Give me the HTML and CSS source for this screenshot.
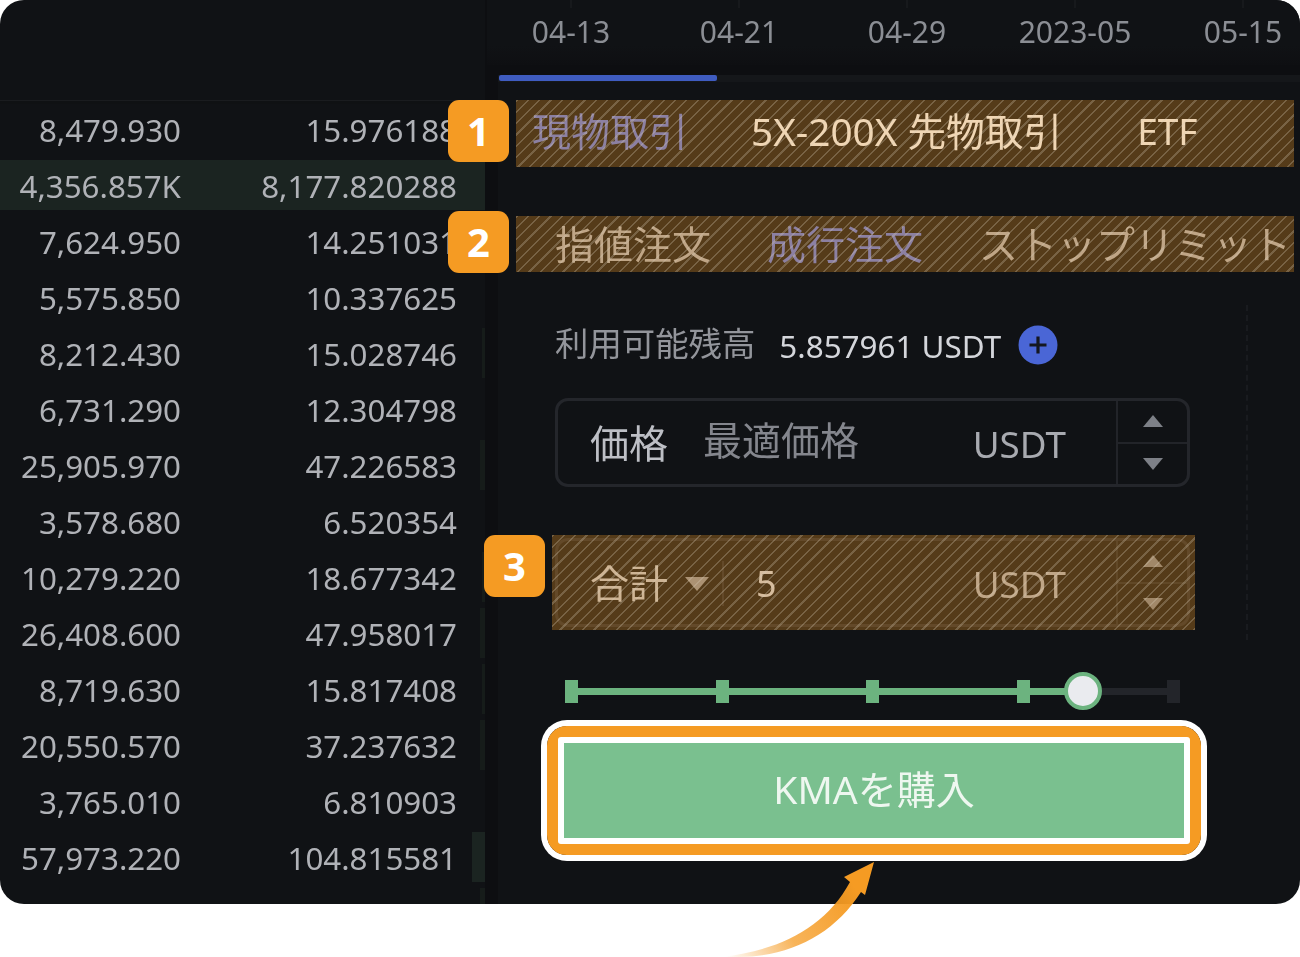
FILE: index.html
```html
<!DOCTYPE html>
<html lang="ja">
<head>
<meta charset="utf-8">
<title>KMA 購入</title>
<link rel="stylesheet" href="styles.css">
</head>
<body>
<div class="page">
  <main class="panel">
    <section class="book">
      <div class="book-head"></div>
      <div class="row"><span class="num">8,479.930</span><span class="num">15.976188</span></div>
      <div class="row"><i class="depth" style="width:100%"></i><span class="num">4,356.857K</span><span class="num">8,177.820288</span></div>
      <div class="row"><span class="num">7,624.950</span><span class="num">14.251031</span></div>
      <div class="row"><span class="num">5,575.850</span><span class="num">10.337625</span></div>
      <div class="row"><i class="depth depth-thin" style="width:3px"></i><span class="num">8,212.430</span><span class="num">15.028746</span></div>
      <div class="row"><span class="num">6,731.290</span><span class="num">12.304798</span></div>
      <div class="row"><i class="depth depth-thin" style="width:5px"></i><span class="num">25,905.970</span><span class="num">47.226583</span></div>
      <div class="row"><span class="num">3,578.680</span><span class="num">6.520354</span></div>
      <div class="row"><i class="depth depth-thin" style="width:3px"></i><span class="num">10,279.220</span><span class="num">18.677342</span></div>
      <div class="row"><i class="depth depth-thin" style="width:5px"></i><span class="num">26,408.600</span><span class="num">47.958017</span></div>
      <div class="row"><i class="depth depth-thin" style="width:3px"></i><span class="num">8,719.630</span><span class="num">15.817408</span></div>
      <div class="row"><i class="depth depth-thin" style="width:5px"></i><span class="num">20,550.570</span><span class="num">37.237632</span></div>
      <div class="row"><span class="num">3,765.010</span><span class="num">6.810903</span></div>
      <div class="row"><i class="depth" style="width:13px"></i><span class="num">57,973.220</span><span class="num">104.815581</span></div>
      <div class="row"><i class="depth depth-thin" style="width:5px"></i><span class="num">30,551.850</span><span class="num">54.736090</span></div>
    </section>
    <div class="gutter"></div>
    <section class="trade">
      <div class="axis">
        <span class="date">04-13</span>
        <span class="date">04-21</span>
        <span class="date">04-29</span>
        <span class="date">2023-05</span>
        <span class="date">05-15</span>
      </div>
      <div class="strip"><i class="strip-active"></i></div>
      <nav class="markets">
        <span class="tab tab-active tab-spot">現物取引</span>
        <span class="tab tab-white tab-futures">5X-200X 先物取引</span>
        <span class="tab tab-white tab-etf">ETF</span>
        <i class="hatch hatch-markets"></i>
        <b class="badge badge-markets">1</b>
      </nav>
      <nav class="orders">
        <span class="tab">指値注文</span>
        <span class="tab tab-active">成行注文</span>
        <span class="tab">ストップリミット</span>
        <i class="hatch hatch-orders"></i>
        <b class="badge badge-orders">2</b>
      </nav>
      <div class="form-wrap">
        <form class="form">
          <div class="balance">
            <span class="balance-label">利用可能残高</span>
            <span class="balance-value">5.857961 USDT</span>
            <svg class="plus" viewBox="0 0 40 40" aria-hidden="true"><circle cx="20" cy="20" r="19.5" fill="#4a66d6"/><path d="M20 11.5v17M11.5 20h17" stroke="#14171f" stroke-width="3.2"/></svg>
          </div>
          <div class="field">
            <div class="field-main">
              <span class="field-label">価格</span>
              <span class="field-hint">最適価格</span>
              <span class="field-unit">USDT</span>
            </div>
            <div class="stepper"><span class="step"><i class="tri-up"></i></span><span class="step"><i class="tri-down"></i></span></div>
          </div>
          <div class="field field-total">
            <div class="field-main">
              <span class="field-label">合計</span>
              <i class="tri-down tri-select"></i>
              <i class="field-sep"></i>
              <span class="field-amount">5</span>
              <span class="field-unit">USDT</span>
            </div>
            <div class="stepper"><span class="step"><i class="tri-up"></i></span><span class="step"><i class="tri-down"></i></span></div>
            <i class="hatch hatch-total"></i>
            <b class="badge badge-total">3</b>
          </div>
          <div class="slider">
            <i class="tick"></i><i class="tick"></i><i class="tick"></i><i class="tick"></i><i class="tick tick-off"></i>
            <i class="thumb"></i>
          </div>
          <div class="buy">
            <span class="buy-label">KMAを購入</span>
            <i class="callout"></i>
          </div>
        </form>
        <i class="rail"></i>
      </div>
    </section>
  </main>
  <svg class="arrow" viewBox="0 0 200 110" aria-hidden="true">
    <defs>
      <linearGradient id="fade" x1="25" y1="105" x2="150" y2="30" gradientUnits="userSpaceOnUse">
        <stop offset="0" stop-color="#f59b23" stop-opacity="0"/>
        <stop offset=".45" stop-color="#f59b23" stop-opacity=".75"/>
        <stop offset="1" stop-color="#f59b23"/>
      </linearGradient>
    </defs>
    <path fill="url(#fade)" d="M22 107C80 100 125 78 150 32L144 27L174 12L165 45L161 42C134 84 92 106 40 107Z"/>
  </svg>
</div>
</body>
</html>
```

FILE: styles.css
```css
* { box-sizing: border-box; }
html, body { margin: 0; padding: 0; background: #fff; }
body {
  font-family: "Noto Sans", "Noto Sans CJK JP", sans-serif;
  overflow: hidden;
}
i, b { display: block; font-style: normal; }
.page { position: relative; width: 1300px; height: 957px; overflow: hidden; }
.panel {
  display: flex;
  width: 1300px;
  height: 904px;
  background: #101215;
  border-radius: 24px;
  overflow: hidden;
}

/* order book */
.book { width: 485px; flex: none; }
.book-head { height: 104px; border-bottom: 3px solid #0f1113; box-shadow: inset 0 -1px 0 #1a1c1f; }
.row {
  position: relative;
  display: grid;
  grid-template-columns: 181px 276px;
  height: 56px;
  padding-bottom: 4px;
  align-items: center;
  justify-items: end;
}
.depth { position: absolute; right: 0; top: 0; height: 50px; background: #1b2421; }
.depth-thin { background: #161c1a; }
.num {
  position: relative;
  font-size: 31.3px;
  line-height: 52px;
  color: #b0b2b7;
  white-space: nowrap;
  filter: blur(.5px);
}

.gutter { width: 13px; flex: none; background: #0d0e11; }

/* right column */
.trade { flex: 1; min-width: 0; }
.axis {
  display: grid;
  grid-template-columns: repeat(5, 168px);
  margin-left: -11px;
  height: 65px;
  padding-bottom: 2px;
  align-items: center;
  justify-items: center;
  background:
    linear-gradient(90deg, transparent 83px, #17191c 83px 85px, transparent 85px) 0 0 / 168px 8px repeat-x,
    linear-gradient(#101215 70%, #0e0f12);
}
.date { font-size: 30px; color: #8b8e94; white-space: nowrap; filter: blur(.5px); }
.strip { height: 35px; padding-top: 10px; background: linear-gradient(#0d0e11 10px, #15171a 10px, #15171a 17px, #101215 17px); }
.strip-active { width: 218px; height: 6px; margin-left: 1px; border-radius: 2px; background: #3f5cc0; }

.markets, .orders { position: relative; display: flex; align-items: center; white-space: nowrap; }
.markets { height: 67px; padding: 0 0 5px 34px; }
.orders { height: 56px; margin-top: 49px; padding-left: 57px; gap: 56px; }
.tab { font-size: 39px; line-height: 1.2; color: #a8aab0; filter: blur(.5px); }
.tab-active { color: #5f75d8; }
.tab-white { color: #eeeff2; }
.tab-futures { margin-left: 63px; font-size: 38.7px; }
.tab-etf { margin-left: 75px; font-size: 37px; }

.hatch {
  position: absolute;
  background:
    repeating-linear-gradient(135deg, rgba(215, 205, 185, .27) 0 1.6px, transparent 1.6px 8px),
    rgba(245, 155, 35, .3);
}
.hatch-markets { left: 18px; right: 6px; top: 0; bottom: 0; }
.hatch-orders { left: 18px; right: 6px; top: 0; bottom: 0; }
.hatch-total { left: -6px; right: -8px; top: -6px; bottom: -6px; }

.badge {
  position: absolute;
  width: 61px;
  height: 62px;
  border-radius: 11px;
  background: #f59b23;
  color: #fff;
  font-size: 40px;
  font-weight: 700;
  line-height: 62px;
  text-align: center;
}
.badge-markets { left: -50px; top: 0; }
.badge-orders { left: -50px; top: -5px; }
.badge-total { left: -74px; top: -6px; }

/* form */
.form-wrap { display: flex; align-items: flex-start; }
.form { width: 635px; margin: 0 0 0 57px; padding-top: 53px; flex: none; }
.balance { display: flex; align-items: center; height: 40px; }
.balance-label { font-size: 33.4px; line-height: 40px; margin-top: -4px; color: #93959b; filter: blur(.5px); }
.balance-value { font-size: 31.4px; margin-left: 24px; color: #d4d6db; white-space: nowrap; filter: blur(.4px); }
.plus { width: 40px; height: 40px; margin-left: 17px; flex: none; }

.field {
  position: relative;
  display: flex;
  height: 89px;
  margin-top: 33px;
  border: 3px solid #24262b;
  border-radius: 13px;
}
.field-total { margin-top: 51px; }
.field-main { position: relative; flex: 1; display: flex; align-items: center; padding: 2px 0 0 32px; white-space: nowrap; }
.field-label { font-size: 39px; line-height: 1.2; color: #bdbfc5; filter: blur(.5px); }
.field-hint { font-size: 39px; line-height: 1.2; margin: -6px 0 0 35px; color: #84868d; filter: blur(.5px); }
.field-unit { margin-left: auto; margin-right: 50px; font-size: 36.8px; color: #a8aab0; filter: blur(.5px); }
.field-amount { font-size: 36px; color: #c9cbd1; margin-left: 32px; filter: blur(.5px); }
.field-sep { width: 2px; height: 45px; margin-left: 13px; background: #24262b; }
.stepper { width: 71px; flex: none; display: flex; flex-direction: column; border-left: 2px solid #222429; }
.step { flex: 1; display: flex; align-items: center; justify-content: center; }
.step + .step { border-top: 2px solid #222429; }
.tri-up, .tri-down { width: 0; height: 0; border-left: 10px solid transparent; border-right: 10px solid transparent; }
.tri-up { border-bottom: 12px solid #7d8087; }
.tri-down { border-top: 12px solid #7d8087; }
.tri-select { margin-left: 17px; border-left-width: 12px; border-right-width: 12px; border-top: 14px solid #8d8f95; }

.slider {
  position: relative;
  display: flex;
  justify-content: space-between;
  width: 615px;
  height: 23px;
  margin: 53px 0 0 10px;
  background: linear-gradient(90deg, #6cb37f 84%, #23252a 84%) center / 100% 7px no-repeat;
}
.tick { width: 13px; height: 23px; background: #6cb37f; }
.tick-off { background: #23252a; }
.thumb {
  position: absolute;
  left: 499px;
  top: -8px;
  width: 38px;
  height: 38px;
  border-radius: 50%;
  background: #eaebef;
  border: 4px solid #6cb37f;
}

.buy {
  position: relative;
  display: flex;
  align-items: center;
  justify-content: center;
  width: 620px;
  height: 95px;
  margin: 40px 0 0 9px;
  background: #7ac08f;
}
.buy-label { font-size: 39px; line-height: 1.2; margin-top: -2px; color: #eef7f0; filter: blur(.4px); }
.callout {
  position: absolute;
  inset: -17px;
  border: 11px solid #f59b23;
  border-radius: 20px;
  box-shadow: 0 0 0 6px #fff;
}
.callout::before {
  content: "";
  position: absolute;
  inset: 0;
  border: 6px solid #fff;
  border-radius: 3px;
}
.rail { width: 0; height: 335px; margin: 33px 0 0 56px; border-left: 2px dashed #191b1f; }

.arrow { position: absolute; left: 700px; top: 850px; width: 200px; height: 110px; }
```
